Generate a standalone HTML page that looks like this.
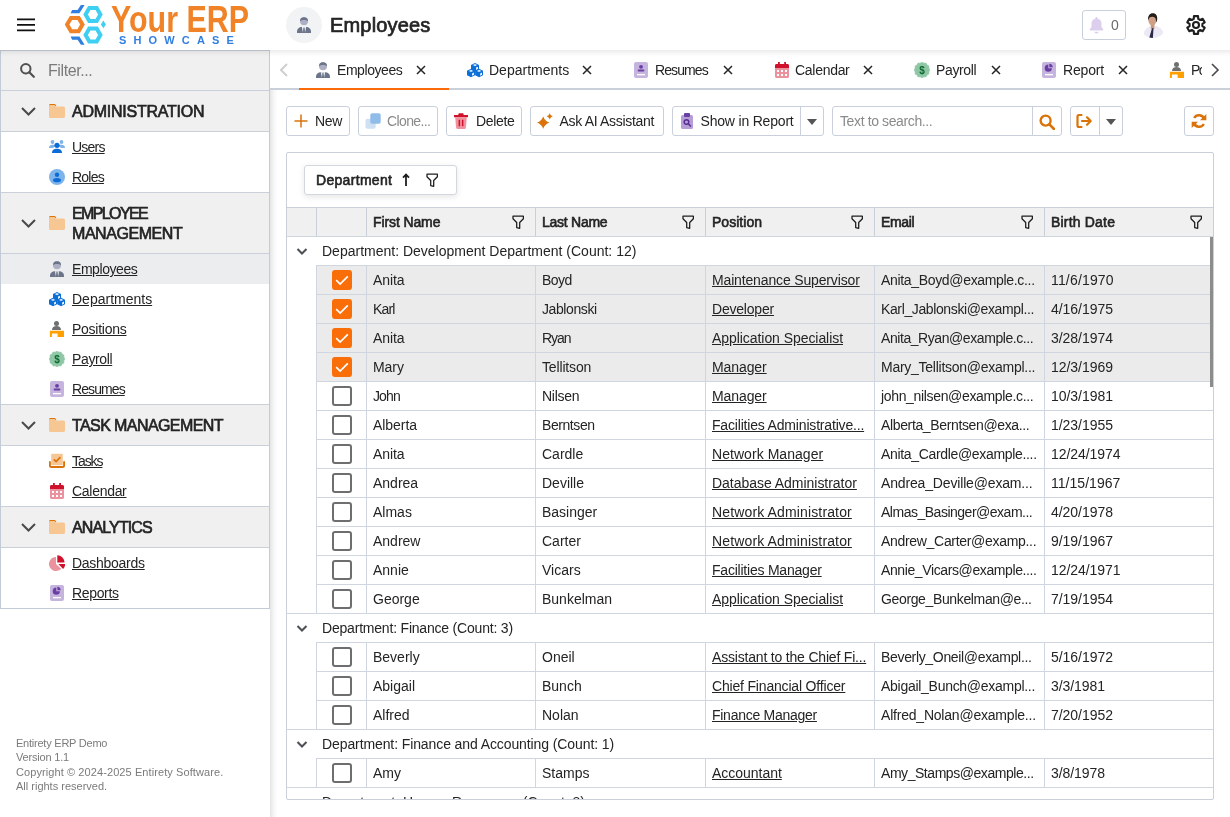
<!DOCTYPE html>
<html lang="en">
<head>
<meta charset="utf-8">
<title>Employees - Your ERP Showcase</title>
<style>
*{box-sizing:border-box;margin:0;padding:0}
html,body{width:1230px;height:817px;overflow:hidden;background:#fff}
body{font-family:"Liberation Sans",sans-serif;font-size:14px;color:#242424;position:relative;will-change:transform}
svg{display:block}
.abs{position:absolute}
/* ---------- header ---------- */
#hdr{position:absolute;left:0;top:0;width:1230px;height:50px;background:#fff}
#burger{position:absolute;left:17px;top:18px;width:20px;height:14px}
#burger i{position:absolute;left:0;width:20px;height:2px;background:#1a1a1a}
#logo{position:absolute;left:60px;top:0}
#brand1{position:absolute;left:111px;top:1.5px;font-size:36px;font-weight:bold;color:#f08228;line-height:36px;white-space:nowrap;transform:scaleX(.845);transform-origin:0 0}
#brand2{position:absolute;left:119px;top:34px;font-size:11px;font-weight:bold;color:#2f7fe0;letter-spacing:7.15px;line-height:12px;white-space:nowrap}
#ttlico{position:absolute;left:286px;top:7px;width:36px;height:36px;border-radius:50%;background:#f2f3f4}
#ttl{position:absolute;left:330px;top:11px;font-size:20px;font-weight:normal;-webkit-text-stroke:.7px #242424;letter-spacing:.17px;line-height:28px;color:#242424;white-space:nowrap}
#bell{position:absolute;left:1082px;top:10px;width:44px;height:30px;border:1px solid #c9d0db;border-radius:3px;background:#fff}
#bell span{position:absolute;left:28px;top:6px;font-size:14px;line-height:16px;color:#6b6b6b}
/* ---------- sidebar ---------- */
#side{position:absolute;left:0;top:50px;width:270px;height:767px;background:#fff}
#nav{position:absolute;left:0;top:0;width:270px;height:559px;border:1px solid #c3cbd6}
.shadow{position:absolute;left:270px;top:90px;width:8px;height:727px;background:linear-gradient(90deg,rgba(0,0,0,.10),rgba(0,0,0,.03) 50%,rgba(0,0,0,0))}
.hshadow{position:absolute;left:0;top:50px;width:1230px;height:7px;background:linear-gradient(180deg,rgba(0,0,0,.075),rgba(0,0,0,.02) 60%,rgba(0,0,0,0))}
.frow{position:absolute;left:0;top:0;width:268px;height:39px;background:#f0f0f0}
.frow span{position:absolute;left:47px;top:10px;font-size:16px;line-height:20px;color:#7a7a7a;letter-spacing:-.4px}
.gh{position:absolute;left:0;width:268px;background:#f0f0f0;border-bottom:1px solid #c9d0da;border-top:1px solid #c9d0da}
.gh b{position:absolute;left:71px;font-size:16px;line-height:20px;font-weight:normal;-webkit-text-stroke:.65px #242424;color:#242424;white-space:nowrap}
.gh .chev{position:absolute;left:20px}
.gh .fold{position:absolute;left:48px}
.ni{position:absolute;left:0;width:268px;height:30px}
.ni.sel{background:#ecedee}
.ni a{position:absolute;left:71px;top:6px;font-size:14px;line-height:18px;color:#242424;text-decoration:underline;white-space:nowrap}
.ni svg{position:absolute;left:48px;top:7px}
#foot{position:absolute;left:16px;top:686px;font-size:11px;line-height:14.35px;color:#7b7b7b;white-space:nowrap}
/* ---------- tabs ---------- */
#tabs{position:absolute;left:270px;top:50px;width:960px;height:40px;border-bottom:2px solid #c9d0da}
.tab{position:absolute;top:0;height:40px}
.tl{position:absolute;top:11px;font-size:14px;line-height:18px;white-space:nowrap;color:#242424}
.tab svg{position:absolute}
.tabline{position:absolute;left:299px;top:88px;width:150px;height:2px;background:#fa6a0a}
/* ---------- toolbar ---------- */
.btn{position:absolute;top:106px;height:30px;border:1px solid #c9d0db;border-radius:3px;background:#fff}
.bl{position:absolute;top:6px;font-size:14px;line-height:16px;white-space:nowrap}
.sep{position:absolute;top:0;width:1px;height:28px;background:#c9d0db}
.btn svg{position:absolute}
/* ---------- grid ---------- */
#grid{position:absolute;left:286px;top:152px;width:928px;height:648px;border:1px solid #c9d0da;border-radius:2px;overflow:hidden;background:#fff}
#chip{position:absolute;left:17px;top:12px;width:153px;height:30px;border:1px solid #d3d8e0;border-radius:3px;background:#fff;box-shadow:0 2px 6px rgba(0,0,0,.10)}
#chip b{position:absolute;left:11px;top:6px;font-size:14px;line-height:16px;font-weight:normal;-webkit-text-stroke:.6px #242424;white-space:nowrap}
.gr{position:absolute;left:0;width:926px;height:29px}
.gr.g{border-top:1px solid #cfd6df}
.gr.hd{background:#f0f0f0;border-top:1px solid #c9d0da}
.gr.sel .c{background:#ebebeb}
.c{position:absolute;top:0;height:29px;border-left:1px solid #cfd6df;border-top:1px solid #cfd6df;padding-left:6px;font-size:14px;line-height:28px;white-space:nowrap;overflow:hidden}
.gr.hd .c{top:-1px;border-top-color:#c9d0da;padding-left:6px;-webkit-text-stroke:.6px #242424;border-left-color:#c9d0da}
.c0{left:29px;width:50px}.c1{left:79px;width:169px}.c2{left:248px;width:170px}.c3{left:418px;width:169px}.c4{left:587px;width:170px}.c5{left:757px;width:169px}
.c u{text-decoration:underline}
.gt{position:absolute;left:35px;top:0;font-size:14px;line-height:28px;white-space:nowrap}
.gchev{position:absolute;left:9px;top:8px}
.cb{position:absolute;left:15px;top:4px;width:20px;height:20px;border:2px solid #6e6e6e;border-radius:3px;background:#fff}
.cb.on{background:#fa6e0a;border-color:#fa6e0a}
.filt{position:absolute;top:7px;right:11px}
</style>
</head>
<body>
<div id="hdr">
  <svg class="abs" style="left:16px;top:16px" width="20" height="16" viewBox="0 0 20 16"><path d="M1 3.4h18M1 8.9h18M1 14.4h18" stroke="#111" stroke-width="1.9" fill="none"/></svg>
  <svg id="logo" width="50" height="50" viewBox="60 0 50 50">
<polygon points="82.5,24.6 78.6,31.2 71,31.2 67.1,24.6 71,18 78.6,18" fill="none" stroke="#f08228" stroke-width="4" stroke-linejoin="miter"/>
<polygon points="100.4,14.5 96.7,20.9 89.3,20.9 85.6,14.5 89.3,8.1 96.7,8.1" fill="none" stroke="#3ecff2" stroke-width="4"/>
<polygon points="100.4,35 96.7,41.4 89.3,41.4 85.6,35 89.3,28.6 96.7,28.6" fill="none" stroke="#3ecff2" stroke-width="4"/>
<polygon points="100.9,24.4 103.4,20.5 105.9,24.4 103.4,28.3" fill="#3ecff2"/>
<polygon points="70.6,13.2 72.1,10 77.6,10 80.9,5.1 84.6,5.1 79.4,13.2" fill="#2f7fe0"/>
<polygon points="70.6,36.6 72.1,39.8 77.6,39.8 80.9,44.7 84.6,44.7 79.4,36.6" fill="#2f7fe0"/>
</svg>
  <div id="brand1">Your ERP</div>
  <div id="brand2">SHOWCASE</div>
  <div id="ttlico"><svg class="abs" style="left:10px;top:10px" width="16" height="16" viewBox="0 0 16 16"><circle cx="8" cy="4.2" r="4" fill="#adafc4"/><path d="M4 4.2a4 4 0 0 1 8 0c-1.1-.800-2.3-1.2-4-1.2s-2.9.4-4 1.2z" fill="#6b7489"/><path d="M1 16v-1.5C1 11.8 3.2 10 5.8 10h4.4c2.6 0 4.8 1.8 4.8 4.5V16z" fill="#6b7489"/><path d="M5.9 10h4.2L9 16H7z" fill="#f3f5f5"/><path d="M7.4 10.6h1.2l.5 5.4H6.9z" fill="#6b7489"/></svg></div>
  <div id="ttl">Employees</div>
  <div id="bell"><svg class="abs" style="left:6px;top:6px" width="15" height="17" viewBox="0 0 15 17"><path d="M7.5 0c.6 0 1 .4 1 1v.5c2.4.5 4 2.5 4 5v3.5l1.7 2.3c.3.5 0 1.2-.6 1.2H1.4c-.6 0-.9-.7-.6-1.2L2.5 10V6.5c0-2.5 1.6-4.5 4-5V1c0-.6.4-1 1-1z" fill="#dccfee"/><path d="M5.3 14.8h4.4c-.3 1.1-1.1 1.8-2.2 1.8s-1.9-.7-2.2-1.8z" fill="#dccfee"/></svg><span>0</span></div>
  <svg class="abs" style="left:1140px;top:12px;border-radius:50%;overflow:hidden" width="26" height="26" viewBox="0 0 26 26"><g><ellipse cx="13.6" cy="22" rx="9.8" ry="8.2" fill="#ece9f4"/><path d="M10.8 12h3.6v4.5l-1.8 1.5-1.8-1.5z" fill="#c9977c"/><path d="M12 16.2h1.5l-.6 9.8H9.2z" fill="#2b2848"/><ellipse cx="12.4" cy="8.2" rx="4" ry="5.4" fill="#cf9f86"/><path d="M8.2 8.5C7.4 3.8 9.8 1.2 12.8 1.2c3.2 0 5.2 2.6 4.2 7.6l-.9 1.8c.2-3.6-.6-5.6-3.4-5.8-2.4-.2-3.8.8-4.5 3.7z" fill="#241d1a"/></g></svg>
  <svg class="abs" style="left:1185px;top:14px" width="22" height="22" viewBox="0 0 22 22"><path d="M13.22 4.89L13.05 2.13L8.95 2.13L8.78 4.89L6.82 6.02L4.34 4.79L2.3 8.34L4.6 9.87L4.6 12.13L2.3 13.66L4.34 17.21L6.82 15.98L8.78 17.11L8.95 19.87L13.05 19.87L13.22 17.11L15.18 15.98L17.66 17.21L19.7 13.66L17.4 12.13L17.4 9.87L19.7 8.34L17.66 4.79L15.18 6.02Z" fill="none" stroke="#1f1f1f" stroke-width="2.1" stroke-linejoin="round"/><circle cx="11" cy="11" r="3" fill="none" stroke="#1f1f1f" stroke-width="2.1"/></svg>
</div>
<div id="side">
  <div id="nav">
    <div class="frow"><svg class="abs" style="left:18px;top:11px" width="16" height="16" viewBox="0 0 16 16"><circle cx="6.8" cy="6.8" r="4.7" fill="none" stroke="#505050" stroke-width="2"/><path d="M10.3 10.3l4.5 4.5" stroke="#505050" stroke-width="2.2" stroke-linecap="round"/></svg><span>Filter...</span></div>
    <div class="gh" style="top:39px;height:42px"><span class="chev" style="top:13px"><svg width="15" height="14" viewBox="0 0 15 14" ><path d="M1 4l6.5 6.5L14 4" fill="none" stroke="#4a4a4a" stroke-width="2"/></svg></span><span class="fold" style="top:12px"><svg width="16" height="16" viewBox="0 0 16 16" ><path d="M0 2.5C0 1.7.6 1 1.5 1H6l1.5 2H0z" fill="#d9730a"/><path d="M0 3c0-.6.4-1 1-1h4.6l1.5 1.5h7.4c.8 0 1.5.7 1.5 1.5v8.5c0 .8-.7 1.5-1.5 1.5h-13C.7 15 0 14.3 0 13.5z" fill="#f6c793"/></svg></span><b style="top:11px;letter-spacing:-0.25px">ADMINISTRATION</b></div>
    <div class="ni" style="top:81px"><svg width="16" height="16" viewBox="0 0 16 16" ><g fill="#7fb4ea"><circle cx="3.5" cy="3" r="1.9"/><circle cx="12.5" cy="3" r="1.9"/><path d="M0 9c0-2 1.5-3.2 3.5-3.2S6 6.5 6.5 7L4 9z"/><path d="M16 9c0-2-1.5-3.2-3.5-3.2S10 6.5 9.5 7L12 9z"/></g><g fill="#0b6cd8"><circle cx="8" cy="6.3" r="2.6"/><path d="M3 14c0-3 2.2-4.3 5-4.3s5 1.3 5 4.3z"/></g></svg><a style="letter-spacing:-0.79px">Users</a></div>
    <div class="ni" style="top:111px"><svg width="16" height="16" viewBox="0 0 16 16" ><circle cx="8" cy="8" r="8" fill="#7fb4ea"/><circle cx="8" cy="5.8" r="2.2" fill="#0b6cd8"/><path d="M4 11.5c0-1.8 1.8-2.5 4-2.5s4 .7 4 2.5c0 1-1.8 1.8-4 1.8s-4-.8-4-1.8z" fill="#0b6cd8"/></svg><a style="letter-spacing:-0.77px">Roles</a></div>
    <div class="gh" style="top:141px;height:62px"><span class="chev" style="top:23px"><svg width="15" height="14" viewBox="0 0 15 14" ><path d="M1 4l6.5 6.5L14 4" fill="none" stroke="#4a4a4a" stroke-width="2"/></svg></span><span class="fold" style="top:22px"><svg width="16" height="16" viewBox="0 0 16 16" ><path d="M0 2.5C0 1.7.6 1 1.5 1H6l1.5 2H0z" fill="#d9730a"/><path d="M0 3c0-.6.4-1 1-1h4.6l1.5 1.5h7.4c.8 0 1.5.7 1.5 1.5v8.5c0 .8-.7 1.5-1.5 1.5h-13C.7 15 0 14.3 0 13.5z" fill="#f6c793"/></svg></span><b style="top:11px"><span style="letter-spacing:-1.62px">EMPLOYEE</span><br><span style="letter-spacing:-0.44px">MANAGEMENT</span></b></div>
    <div class="ni sel" style="top:203px"><svg width="16" height="16" viewBox="0 0 16 16" ><circle cx="8" cy="4.2" r="4" fill="#adafc4"/><path d="M4 4.2a4 4 0 0 1 8 0c-1.1-.800-2.3-1.2-4-1.2s-2.9.4-4 1.2z" fill="#6b7489"/><path d="M1 16v-1.5C1 11.8 3.2 10.2 5.8 10.2h4.4c2.6 0 4.8 1.6 4.8 4.3V16z" fill="#6b7489"/><path d="M5.9 10.2h4.2L9 16H7z" fill="#ecedee"/><path d="M7.4 10.8h1.2l.5 5.2H6.9z" fill="#6b7489"/></svg><a style="letter-spacing:-0.44px">Employees</a></div>
    <div class="ni" style="top:233px"><svg width="16" height="16" viewBox="0 0 16 16" ><polygon points="8,0.9 12,2.9 12,7.4 8,9.4 4,7.4 4,2.9" fill="#0b6fd6"/><polygon points="8,2 10.2,3.1 8,4.2 5.8,3.1" fill="#d9e9fa"/><polygon points="9.1,5.6000000000000005 10.9,4.7 10.9,7 9.1,7.9" fill="#fff"/><polygon points="4,6.7 8,8.7 8,13.2 4,15.2 0,13.2 0,8.7" fill="#0b6fd6"/><polygon points="4,7.800000000000001 6.2,8.9 4,10 1.7999999999999998,8.9" fill="#d9e9fa"/><polygon points="5.1,11.4 6.9,10.5 6.9,12.8 5.1,13.7" fill="#fff"/><polygon points="12.1,6.7 16.1,8.7 16.1,13.2 12.1,15.2 8.1,13.2 8.1,8.7" fill="#0b6fd6"/><polygon points="12.1,7.800000000000001 14.3,8.9 12.1,10 9.899999999999999,8.9" fill="#d9e9fa"/><polygon points="13.2,11.4 15,10.5 15,12.8 13.2,13.7" fill="#fff"/></svg><a style="">Departments</a></div>
    <div class="ni" style="top:263px"><svg width="16" height="16" viewBox="0 0 16 16" ><circle cx="7.5" cy="2.5" r="2.5" fill="#6f6f6f"/><path d="M3 9c0-2.6 1.8-4 4.5-4s4.5 1.4 4.5 4z" fill="#6f6f6f"/><path d="M.9 9.8H15V16H8.6v-3.6H2.9V16h-2z" fill="#ffa000"/></svg><a style="letter-spacing:-0.26px">Positions</a></div>
    <div class="ni" style="top:293px"><svg width="16" height="16" viewBox="0 0 16 16" ><polygon points="8,0 9.84,1.14 12,1.07 13.02,2.98 14.93,4 14.86,6.16 16,8 14.86,9.84 14.93,12 13.02,13.02 12,14.93 9.84,14.86 8,16 6.16,14.86 4,14.93 2.98,13.02 1.07,12 1.14,9.84 0,8 1.14,6.16 1.07,4 2.98,2.98 4,1.07 6.16,1.14" fill="#8fc7a6" stroke="#8fc7a6" stroke-width=".6" stroke-linejoin="round"/><text x="8" y="11.5" font-family="Liberation Sans,sans-serif" font-weight="bold" font-size="10" fill="#0e6a2f" text-anchor="middle">$</text></svg><a style="letter-spacing:-0.37px">Payroll</a></div>
    <div class="ni" style="top:323px"><svg width="16" height="16" viewBox="0 0 16 16" ><rect x="1" y="0" width="14" height="16" rx="2" fill="#c5b4dd"/><circle cx="8" cy="4.8" r="1.9" fill="#6a3fa3"/><rect x="4.6" y="7.5" width="6.8" height="2" rx="1" fill="#6a3fa3"/><rect x="4" y="12" width="8" height="1.3" fill="#fff"/></svg><a style="letter-spacing:-0.91px">Resumes</a></div>
    <div class="gh" style="top:353px;height:42px"><span class="chev" style="top:13px"><svg width="15" height="14" viewBox="0 0 15 14" ><path d="M1 4l6.5 6.5L14 4" fill="none" stroke="#4a4a4a" stroke-width="2"/></svg></span><span class="fold" style="top:12px"><svg width="16" height="16" viewBox="0 0 16 16" ><path d="M0 2.5C0 1.7.6 1 1.5 1H6l1.5 2H0z" fill="#d9730a"/><path d="M0 3c0-.6.4-1 1-1h4.6l1.5 1.5h7.4c.8 0 1.5.7 1.5 1.5v8.5c0 .8-.7 1.5-1.5 1.5h-13C.7 15 0 14.3 0 13.5z" fill="#f6c793"/></svg></span><b style="top:11px;letter-spacing:-0.59px">TASK MANAGEMENT</b></div>
    <div class="ni" style="top:395px"><svg width="16" height="16" viewBox="0 0 16 16" ><rect x="2.2" y="0.8" width="11.6" height="11.5" rx="1" fill="#f6c793"/><path d="M4.8 6.3l2.3 2.3 4.3-4.5" fill="none" stroke="#d9730a" stroke-width="1.7"/><path d="M.9 9v3.6c0 .8.6 1.4 1.4 1.4h11.4c.8 0 1.4-.6 1.4-1.4V9" fill="none" stroke="#d9730a" stroke-width="1.9" stroke-linecap="round"/></svg><a style="letter-spacing:-1.07px">Tasks</a></div>
    <div class="ni" style="top:425px"><svg width="16" height="16" viewBox="0 0 16 16" ><path d="M1 6h14v8.5c0 .8-.6 1.5-1.5 1.5h-11C1.6 16 1 15.3 1 14.5z" fill="#ea929e"/><path d="M4 0h1.8v2h4.4V0H12v2h1.5c.9 0 1.5.7 1.5 1.5V6H1V3.5C1 2.7 1.6 2 2.5 2H4z" fill="#d0112b"/><g fill="#fff"><rect x="3" y="8" width="2" height="2"/><rect x="7" y="8" width="2" height="2"/><rect x="11" y="8" width="2" height="2"/><rect x="3" y="12" width="2" height="2"/><rect x="7" y="12" width="2" height="2"/><rect x="11" y="12" width="2" height="2"/></g></svg><a style="letter-spacing:-0.29px">Calendar</a></div>
    <div class="gh" style="top:455px;height:42px"><span class="chev" style="top:13px"><svg width="15" height="14" viewBox="0 0 15 14" ><path d="M1 4l6.5 6.5L14 4" fill="none" stroke="#4a4a4a" stroke-width="2"/></svg></span><span class="fold" style="top:12px"><svg width="16" height="16" viewBox="0 0 16 16" ><path d="M0 2.5C0 1.7.6 1 1.5 1H6l1.5 2H0z" fill="#d9730a"/><path d="M0 3c0-.6.4-1 1-1h4.6l1.5 1.5h7.4c.8 0 1.5.7 1.5 1.5v8.5c0 .8-.7 1.5-1.5 1.5h-13C.7 15 0 14.3 0 13.5z" fill="#f6c793"/></svg></span><b style="top:11px;letter-spacing:-0.88px">ANALYTICS</b></div>
    <div class="ni" style="top:497px"><svg width="16" height="16" viewBox="0 0 16 16" ><path d="M7 9V2A7 7 0 1 0 12.2 13.68z" fill="#ea929e"/><path d="M8.3 0.3A7.2 7.2 0 0 1 15.5 7.5H8.3z" fill="#d0112b"/><path d="M9.4 9H16.1A7.1 7.1 0 0 1 14.11 13.93z" fill="#d0112b"/></svg><a style="letter-spacing:-0.28px">Dashboards</a></div>
    <div class="ni" style="top:527px"><svg width="16" height="16" viewBox="0 0 16 16" ><rect x="1" y="0" width="14" height="16" rx="2" fill="#c5b4dd"/><path d="M7.3 2.6v3.6h3.6A3.6 3.6 0 1 1 7.3 2.6z" fill="#6a3fa3"/><path d="M8.3 1.8a3.5 3.5 0 0 1 3.4 3.4H8.3z" fill="#6a3fa3"/><rect x="4" y="12" width="8" height="1.3" fill="#fff"/></svg><a style="letter-spacing:-0.35px">Reports</a></div>
  </div>
  <div id="foot"><span style="letter-spacing:-.23px">Entirety ERP Demo</span><br><span style="letter-spacing:-.18px">Version 1.1</span><br><span style="letter-spacing:.09px">Copyright © 2024-2025 Entirety Software.</span><br>All rights reserved.</div>
</div>
<div class="hshadow"></div>
<div class="shadow"></div>
<div id="tabs">
  <svg class="abs" style="left:9px;top:13px" width="10" height="14" viewBox="0 0 10 14"><path d="M8 1L2 7l6 6" fill="none" stroke="#cfcfcf" stroke-width="2"/></svg>
  <span class="abs" style="left:45px;top:12px"><svg width="16" height="16" viewBox="0 0 16 16" ><circle cx="8" cy="4.2" r="4" fill="#adafc4"/><path d="M4 4.2a4 4 0 0 1 8 0c-1.1-.800-2.3-1.2-4-1.2s-2.9.4-4 1.2z" fill="#6b7489"/><path d="M1 16v-1.5C1 11.8 3.2 10.2 5.8 10.2h4.4c2.6 0 4.8 1.6 4.8 4.3V16z" fill="#6b7489"/><path d="M5.9 10.2h4.2L9 16H7z" fill="#fff"/><path d="M7.4 10.8h1.2l.5 5.2H6.9z" fill="#6b7489"/></svg></span><span class="tl" style="left:67px;letter-spacing:-0.44px">Employees</span><span class="abs" style="left:146px;top:15px"><svg width="10" height="10" viewBox="0 0 10 10" ><path d="M1 1l8 8M9 1l-8 8" stroke="#242424" stroke-width="1.5" fill="none"/></svg></span>
  <span class="abs" style="left:197px;top:12px"><svg width="16" height="16" viewBox="0 0 16 16" ><polygon points="8,0.9 12,2.9 12,7.4 8,9.4 4,7.4 4,2.9" fill="#0b6fd6"/><polygon points="8,2 10.2,3.1 8,4.2 5.8,3.1" fill="#d9e9fa"/><polygon points="9.1,5.6000000000000005 10.9,4.7 10.9,7 9.1,7.9" fill="#fff"/><polygon points="4,6.7 8,8.7 8,13.2 4,15.2 0,13.2 0,8.7" fill="#0b6fd6"/><polygon points="4,7.800000000000001 6.2,8.9 4,10 1.7999999999999998,8.9" fill="#d9e9fa"/><polygon points="5.1,11.4 6.9,10.5 6.9,12.8 5.1,13.7" fill="#fff"/><polygon points="12.1,6.7 16.1,8.7 16.1,13.2 12.1,15.2 8.1,13.2 8.1,8.7" fill="#0b6fd6"/><polygon points="12.1,7.800000000000001 14.3,8.9 12.1,10 9.899999999999999,8.9" fill="#d9e9fa"/><polygon points="13.2,11.4 15,10.5 15,12.8 13.2,13.7" fill="#fff"/></svg></span><span class="tl" style="left:219px;">Departments</span><span class="abs" style="left:312px;top:15px"><svg width="10" height="10" viewBox="0 0 10 10" ><path d="M1 1l8 8M9 1l-8 8" stroke="#242424" stroke-width="1.5" fill="none"/></svg></span>
  <span class="abs" style="left:363px;top:12px"><svg width="16" height="16" viewBox="0 0 16 16" ><rect x="1" y="0" width="14" height="16" rx="2" fill="#c5b4dd"/><circle cx="8" cy="4.8" r="1.9" fill="#6a3fa3"/><rect x="4.6" y="7.5" width="6.8" height="2" rx="1" fill="#6a3fa3"/><rect x="4" y="12" width="8" height="1.3" fill="#fff"/></svg></span><span class="tl" style="left:385px;letter-spacing:-0.91px">Resumes</span><span class="abs" style="left:453px;top:15px"><svg width="10" height="10" viewBox="0 0 10 10" ><path d="M1 1l8 8M9 1l-8 8" stroke="#242424" stroke-width="1.5" fill="none"/></svg></span>
  <span class="abs" style="left:504px;top:12px"><svg width="16" height="16" viewBox="0 0 16 16" ><path d="M1 6h14v8.5c0 .8-.6 1.5-1.5 1.5h-11C1.6 16 1 15.3 1 14.5z" fill="#ea929e"/><path d="M4 0h1.8v2h4.4V0H12v2h1.5c.9 0 1.5.7 1.5 1.5V6H1V3.5C1 2.7 1.6 2 2.5 2H4z" fill="#d0112b"/><g fill="#fff"><rect x="3" y="8" width="2" height="2"/><rect x="7" y="8" width="2" height="2"/><rect x="11" y="8" width="2" height="2"/><rect x="3" y="12" width="2" height="2"/><rect x="7" y="12" width="2" height="2"/><rect x="11" y="12" width="2" height="2"/></g></svg></span><span class="tl" style="left:525px;letter-spacing:-0.29px">Calendar</span><span class="abs" style="left:593px;top:15px"><svg width="10" height="10" viewBox="0 0 10 10" ><path d="M1 1l8 8M9 1l-8 8" stroke="#242424" stroke-width="1.5" fill="none"/></svg></span>
  <span class="abs" style="left:644px;top:12px"><svg width="16" height="16" viewBox="0 0 16 16" ><polygon points="8,0 9.84,1.14 12,1.07 13.02,2.98 14.93,4 14.86,6.16 16,8 14.86,9.84 14.93,12 13.02,13.02 12,14.93 9.84,14.86 8,16 6.16,14.86 4,14.93 2.98,13.02 1.07,12 1.14,9.84 0,8 1.14,6.16 1.07,4 2.98,2.98 4,1.07 6.16,1.14" fill="#8fc7a6" stroke="#8fc7a6" stroke-width=".6" stroke-linejoin="round"/><text x="8" y="11.5" font-family="Liberation Sans,sans-serif" font-weight="bold" font-size="10" fill="#0e6a2f" text-anchor="middle">$</text></svg></span><span class="tl" style="left:666px;letter-spacing:-0.37px">Payroll</span><span class="abs" style="left:721px;top:15px"><svg width="10" height="10" viewBox="0 0 10 10" ><path d="M1 1l8 8M9 1l-8 8" stroke="#242424" stroke-width="1.5" fill="none"/></svg></span>
  <span class="abs" style="left:771px;top:12px"><svg width="16" height="16" viewBox="0 0 16 16" ><rect x="1" y="0" width="14" height="16" rx="2" fill="#c5b4dd"/><path d="M7.3 2.6v3.6h3.6A3.6 3.6 0 1 1 7.3 2.6z" fill="#6a3fa3"/><path d="M8.3 1.8a3.5 3.5 0 0 1 3.4 3.4H8.3z" fill="#6a3fa3"/><rect x="4" y="12" width="8" height="1.3" fill="#fff"/></svg></span><span class="tl" style="left:793px;letter-spacing:-0.16px">Report</span><span class="abs" style="left:848px;top:15px"><svg width="10" height="10" viewBox="0 0 10 10" ><path d="M1 1l8 8M9 1l-8 8" stroke="#242424" stroke-width="1.5" fill="none"/></svg></span>
  <span class="abs" style="left:899px;top:12px"><svg width="16" height="16" viewBox="0 0 16 16" ><circle cx="7.5" cy="2.5" r="2.5" fill="#6f6f6f"/><path d="M3 9c0-2.6 1.8-4 4.5-4s4.5 1.4 4.5 4z" fill="#6f6f6f"/><path d="M.9 9.8H15V16H8.6v-3.6H2.9V16h-2z" fill="#ffa000"/></svg></span><span class="tl" style="left:921px;letter-spacing:-1.62px">Po</span>
  <div class="abs" style="left:932px;top:8px;width:28px;height:30px;background:#fff"></div><svg class="abs" style="left:940px;top:13px" width="10" height="14" viewBox="0 0 10 14"><path d="M2 1l6 6-6 6" fill="none" stroke="#4a4a4a" stroke-width="1.6"/></svg>
</div>
<div class="tabline"></div>
<div class="btn" style="left:286px;width:64px"><span class="abs" style="left:6px;top:6px"><svg width="16" height="16" viewBox="0 0 16 16" ><path d="M8 1.5v13M1.5 8h13" stroke="#d9730a" stroke-width="1.5" fill="none"/></svg></span><span class="bl" style="left:28px;color:#242424;letter-spacing:-0.35px">New</span></div>
<div class="btn" style="left:358px;width:80px"><span class="abs" style="left:6px;top:6px"><svg width="16" height="16" viewBox="0 0 16 16" ><rect x="0.5" y="5.8" width="10.2" height="10" rx="1.8" fill="#cfe0f3"/><rect x="5.3" y="0.2" width="10.4" height="10.6" rx="1.8" fill="#8fbce8"/></svg></span><span class="bl" style="left:28px;color:#8a8a8a;letter-spacing:-0.62px">Clone...</span></div>
<div class="btn" style="left:446px;width:76px"><span class="abs" style="left:6px;top:6px"><svg width="16" height="16" viewBox="0 0 16 16" ><path d="M2.2 4.5h11.6l-.9 10c-.1.8-.7 1.5-1.5 1.5H4.6c-.8 0-1.4-.7-1.5-1.5z" fill="#f0929d"/><path d="M1 2h4.2L5.8.3h4.4L10.8 2H15v2.3H1z" fill="#d0112b"/><rect x="5.6" y="6.8" width="1.5" height="6.4" fill="#d0112b"/><rect x="8.9" y="6.8" width="1.5" height="6.4" fill="#d0112b"/></svg></span><span class="bl" style="left:29px;color:#242424;letter-spacing:-0.35px">Delete</span></div>
<div class="btn" style="left:530px;width:134px"><span class="abs" style="left:6px;top:6px"><svg width="16" height="16" viewBox="0 0 16 16" ><path d="M6.2 3.3999999999999995Q7.8740000000000006 7.925999999999999 12.4 9.6Q7.8740000000000006 11.274 6.2 15.8Q4.526 11.274 0 9.6Q4.526 7.925999999999999 6.2 3.3999999999999995z" fill="#d9730a"/><path d="M12.7 0.2999999999999998Q13.45 2.55 15.7 3.3Q13.45 4.05 12.7 6.3Q11.95 4.05 9.7 3.3Q11.95 2.55 12.7 0.2999999999999998z" fill="#d9730a"/></svg></span><span class="bl" style="left:28.5px;color:#242424;letter-spacing:-0.32px">Ask AI Assistant</span></div>
<div class="btn" style="left:672px;width:152px"><span class="abs" style="left:6px;top:6px"><svg width="16" height="16" viewBox="0 0 16 16" ><rect x="2" y="2" width="12" height="14" rx="1.5" fill="#b59ed6"/><rect x="5" y="0" width="6" height="4" rx="1" fill="#6a3fa3"/><circle cx="7.5" cy="9" r="2.3" fill="none" stroke="#5a2d94" stroke-width="1.5"/><path d="M9.2 10.7l2.3 2.3" stroke="#5a2d94" stroke-width="1.6" stroke-linecap="round"/></svg></span><span class="bl" style="left:27.5px;color:#242424;letter-spacing:-0.19px">Show in Report</span><i class="sep" style="left:127px"></i><svg class="abs" style="left:133.5px;top:12px" width="10" height="6" viewBox="0 0 10 6"><path d="M0 0h10L5 6z" fill="#555"/></svg></div>
<div class="btn" style="left:832px;width:230px"><span class="bl" style="left:7px;color:#8a8a8a;letter-spacing:-0.38px">Text to search...</span><i class="sep" style="left:199px"></i><span class="abs" style="left:206px;top:6.5px"><svg width="16" height="16" viewBox="0 0 16 16" ><circle cx="6.6" cy="6.6" r="5" fill="none" stroke="#d9730a" stroke-width="2.4"/><path d="M10.4 10.4l4.6 4.6" stroke="#d9730a" stroke-width="2.6" stroke-linecap="round"/></svg></span></div>
<div class="btn" style="left:1070px;width:53px"><span class="abs" style="left:5px;top:6px"><svg width="18" height="16" viewBox="0 0 18 16" ><path d="M5.5 2H3c-.8 0-1.5.7-1.5 1.5v9c0 .8.7 1.5 1.5 1.5h2.5" fill="none" stroke="#d9730a" stroke-width="2.2" stroke-linecap="round"/><path d="M6 8h8.5M11 4.3L14.7 8 11 11.7" fill="none" stroke="#d9730a" stroke-width="2.2" stroke-linecap="round" stroke-linejoin="round"/></svg></span><i class="sep" style="left:28px"></i><svg class="abs" style="left:35px;top:12px" width="10" height="6" viewBox="0 0 10 6"><path d="M0 0h10L5 6z" fill="#555"/></svg></div>
<div class="btn" style="left:1184px;width:30px"><span class="abs" style="left:6px;top:6px"><svg width="16" height="16" viewBox="0 0 16 16" ><path d="M13.2 6.4A5.4 5.4 0 0 0 3.2 5M2.8 9.6A5.4 5.4 0 0 0 12.8 11" fill="none" stroke="#d9730a" stroke-width="2.5"/><path d="M15.3 1v6.3H9z" fill="#d9730a"/><path d="M.7 15V8.7H7z" fill="#d9730a"/></svg></span></div>
<div id="grid">
<div id="chip"><b style="letter-spacing:0.31px">Department</b><svg class="abs" style="left:96px;top:7px" width="10" height="14" viewBox="0 0 10 14"><path d="M5 13V1.8M2 4.6L5 1.6l3 3" fill="none" stroke="#1f1f1f" stroke-width="1.8"/></svg><span class="abs" style="left:121px;top:7px"><svg width="12.4" height="14.4" viewBox="0 0 12.4 14.4" ><path d="M1 1.2h10.4v2.6L7.7 7.5v5.8L4.7 12.6V7.5L1 3.8z" fill="none" stroke="#1f1f1f" stroke-width="1.3" stroke-linejoin="round"/></svg></span></div>
<div class="gr hd" style="top:54px"><div class="c c0"></div><div class="c c1"><span style="letter-spacing:-0.11px">First Name</span><span class="filt"><svg width="12.4" height="14.4" viewBox="0 0 12.4 14.4" ><path d="M1 1.2h10.4v2.6L7.7 7.5v5.8L4.7 12.6V7.5L1 3.8z" fill="none" stroke="#1f1f1f" stroke-width="1.3" stroke-linejoin="round"/></svg></span></div><div class="c c2"><span style="letter-spacing:-0.26px">Last Name</span><span class="filt"><svg width="12.4" height="14.4" viewBox="0 0 12.4 14.4" ><path d="M1 1.2h10.4v2.6L7.7 7.5v5.8L4.7 12.6V7.5L1 3.8z" fill="none" stroke="#1f1f1f" stroke-width="1.3" stroke-linejoin="round"/></svg></span></div><div class="c c3"><span style="letter-spacing:0.03px">Position</span><span class="filt"><svg width="12.4" height="14.4" viewBox="0 0 12.4 14.4" ><path d="M1 1.2h10.4v2.6L7.7 7.5v5.8L4.7 12.6V7.5L1 3.8z" fill="none" stroke="#1f1f1f" stroke-width="1.3" stroke-linejoin="round"/></svg></span></div><div class="c c4"><span style="letter-spacing:-0.35px">Email</span><span class="filt"><svg width="12.4" height="14.4" viewBox="0 0 12.4 14.4" ><path d="M1 1.2h10.4v2.6L7.7 7.5v5.8L4.7 12.6V7.5L1 3.8z" fill="none" stroke="#1f1f1f" stroke-width="1.3" stroke-linejoin="round"/></svg></span></div><div class="c c5"><span style="letter-spacing:0.19px">Birth Date</span><span class="filt"><svg width="12.4" height="14.4" viewBox="0 0 12.4 14.4" ><path d="M1 1.2h10.4v2.6L7.7 7.5v5.8L4.7 12.6V7.5L1 3.8z" fill="none" stroke="#1f1f1f" stroke-width="1.3" stroke-linejoin="round"/></svg></span></div></div>
<div class="gr g" style="top:83px"><span class="gchev"><svg width="12" height="12" viewBox="0 0 12 12" ><path d="M1.5 4l4.5 4.5L10.5 4" fill="none" stroke="#4d5156" stroke-width="2.1"/></svg></span><span class="gt" style="">Department: Development Department (Count: 12)</span></div>
<div class="gr sel" style="top:112px"><div class="c c0"><span class="cb on"><svg width="16" height="16" viewBox="0 0 16 16"><path d="M2.2 8.2l3.9 3.9 7.7-7.7" fill="none" stroke="#fff" stroke-width="1.7"/></svg></span></div><div class="c c1"><span style="letter-spacing:-0.1px">Anita</span></div><div class="c c2"><span style="letter-spacing:-0.57px">Boyd</span></div><div class="c c3"><u style="letter-spacing:-0.15px">Maintenance Supervisor</u></div><div class="c c4"><span style="letter-spacing:-0.33px">Anita_Boyd@example.c...</span></div><div class="c c5"><span style="letter-spacing:0.17px">11/6/1970</span></div></div>
<div class="gr sel" style="top:141px"><div class="c c0"><span class="cb on"><svg width="16" height="16" viewBox="0 0 16 16"><path d="M2.2 8.2l3.9 3.9 7.7-7.7" fill="none" stroke="#fff" stroke-width="1.7"/></svg></span></div><div class="c c1"><span style="letter-spacing:-0.87px">Karl</span></div><div class="c c2"><span style="letter-spacing:-0.4px">Jablonski</span></div><div class="c c3"><u style="letter-spacing:-0.21px">Developer</u></div><div class="c c4"><span style="letter-spacing:-0.38px">Karl_Jablonski@exampl...</span></div><div class="c c5"><span style="letter-spacing:-0.04px">4/16/1975</span></div></div>
<div class="gr sel" style="top:170px"><div class="c c0"><span class="cb on"><svg width="16" height="16" viewBox="0 0 16 16"><path d="M2.2 8.2l3.9 3.9 7.7-7.7" fill="none" stroke="#fff" stroke-width="1.7"/></svg></span></div><div class="c c1"><span style="letter-spacing:-0.1px">Anita</span></div><div class="c c2"><span style="letter-spacing:-1.03px">Ryan</span></div><div class="c c3"><u style="letter-spacing:-0.06px">Application Specialist</u></div><div class="c c4"><span style="letter-spacing:-0.43px">Anita_Ryan@example.c...</span></div><div class="c c5"><span style="letter-spacing:-0.04px">3/28/1974</span></div></div>
<div class="gr sel" style="top:199px"><div class="c c0"><span class="cb on"><svg width="16" height="16" viewBox="0 0 16 16"><path d="M2.2 8.2l3.9 3.9 7.7-7.7" fill="none" stroke="#fff" stroke-width="1.7"/></svg></span></div><div class="c c1"><span style="letter-spacing:-0.07px">Mary</span></div><div class="c c2"><span style="letter-spacing:-0.15px">Tellitson</span></div><div class="c c3"><u style="letter-spacing:-0.09px">Manager</u></div><div class="c c4"><span style="letter-spacing:-0.26px">Mary_Tellitson@exampl...</span></div><div class="c c5"><span style="letter-spacing:-0.04px">12/3/1969</span></div></div>
<div class="gr" style="top:228px"><div class="c c0"><span class="cb"></span></div><div class="c c1"><span style="letter-spacing:-0.89px">John</span></div><div class="c c2"><span style="letter-spacing:-0.28px">Nilsen</span></div><div class="c c3"><u style="letter-spacing:-0.09px">Manager</u></div><div class="c c4"><span style="letter-spacing:-0.34px">john_nilsen@example.c...</span></div><div class="c c5"><span style="letter-spacing:-0.04px">10/3/1981</span></div></div>
<div class="gr" style="top:257px"><div class="c c0"><span class="cb"></span></div><div class="c c1"><span style="letter-spacing:-0.04px">Alberta</span></div><div class="c c2"><span style="letter-spacing:-0.43px">Berntsen</span></div><div class="c c3"><u style="letter-spacing:-0.18px">Facilities Administrative...</u></div><div class="c c4"><span style="letter-spacing:-0.36px">Alberta_Berntsen@exa...</span></div><div class="c c5"><span style="letter-spacing:-0.04px">1/23/1955</span></div></div>
<div class="gr" style="top:286px"><div class="c c0"><span class="cb"></span></div><div class="c c1"><span style="letter-spacing:-0.1px">Anita</span></div><div class="c c2">Cardle</div><div class="c c3"><u style="letter-spacing:0.05px">Network Manager</u></div><div class="c c4"><span style="letter-spacing:-0.33px">Anita_Cardle@example....</span></div><div class="c c5"><span style="letter-spacing:-0.05px">12/24/1974</span></div></div>
<div class="gr" style="top:315px"><div class="c c0"><span class="cb"></span></div><div class="c c1">Andrea</div><div class="c c2">Deville</div><div class="c c3"><u style="letter-spacing:-0.03px">Database Administrator</u></div><div class="c c4"><span style="letter-spacing:-0.16px">Andrea_Deville@exam...</span></div><div class="c c5"><span style="letter-spacing:0.04px">11/15/1967</span></div></div>
<div class="gr" style="top:344px"><div class="c c0"><span class="cb"></span></div><div class="c c1">Almas</div><div class="c c2">Basinger</div><div class="c c3"><u style="letter-spacing:0.14px">Network Administrator</u></div><div class="c c4"><span style="letter-spacing:-0.49px">Almas_Basinger@exam...</span></div><div class="c c5"><span style="letter-spacing:-0.04px">4/20/1978</span></div></div>
<div class="gr" style="top:373px"><div class="c c0"><span class="cb"></span></div><div class="c c1">Andrew</div><div class="c c2">Carter</div><div class="c c3"><u style="letter-spacing:0.14px">Network Administrator</u></div><div class="c c4"><span style="letter-spacing:-0.31px">Andrew_Carter@examp...</span></div><div class="c c5"><span style="letter-spacing:-0.04px">9/19/1967</span></div></div>
<div class="gr" style="top:402px"><div class="c c0"><span class="cb"></span></div><div class="c c1">Annie</div><div class="c c2">Vicars</div><div class="c c3"><u style="letter-spacing:-0.22px">Facilities Manager</u></div><div class="c c4"><span style="letter-spacing:-0.39px">Annie_Vicars@example....</span></div><div class="c c5"><span style="letter-spacing:-0.07px">12/24/1971</span></div></div>
<div class="gr" style="top:431px"><div class="c c0"><span class="cb"></span></div><div class="c c1">George</div><div class="c c2">Bunkelman</div><div class="c c3"><u style="letter-spacing:-0.06px">Application Specialist</u></div><div class="c c4"><span style="letter-spacing:-0.36px">George_Bunkelman@e...</span></div><div class="c c5"><span style="letter-spacing:-0.04px">7/19/1954</span></div></div>
<div class="gr g" style="top:460px"><span class="gchev"><svg width="12" height="12" viewBox="0 0 12 12" ><path d="M1.5 4l4.5 4.5L10.5 4" fill="none" stroke="#4d5156" stroke-width="2.1"/></svg></span><span class="gt" style="letter-spacing:-0.2px">Department: Finance (Count: 3)</span></div>
<div class="gr" style="top:489px"><div class="c c0"><span class="cb"></span></div><div class="c c1">Beverly</div><div class="c c2">Oneil</div><div class="c c3"><u style="letter-spacing:-0.19px">Assistant to the Chief Fi...</u></div><div class="c c4"><span style="letter-spacing:-0.33px">Beverly_Oneil@exampl...</span></div><div class="c c5"><span style="letter-spacing:-0.04px">5/16/1972</span></div></div>
<div class="gr" style="top:518px"><div class="c c0"><span class="cb"></span></div><div class="c c1">Abigail</div><div class="c c2">Bunch</div><div class="c c3"><u style="letter-spacing:-0.18px">Chief Financial Officer</u></div><div class="c c4"><span style="letter-spacing:-0.28px">Abigail_Bunch@exampl...</span></div><div class="c c5"><span style="letter-spacing:-0.07px">3/3/1981</span></div></div>
<div class="gr" style="top:547px"><div class="c c0"><span class="cb"></span></div><div class="c c1">Alfred</div><div class="c c2">Nolan</div><div class="c c3"><u style="letter-spacing:-0.27px">Finance Manager</u></div><div class="c c4"><span style="letter-spacing:-0.21px">Alfred_Nolan@example...</span></div><div class="c c5"><span style="letter-spacing:-0.04px">7/20/1952</span></div></div>
<div class="gr g" style="top:576px"><span class="gchev"><svg width="12" height="12" viewBox="0 0 12 12" ><path d="M1.5 4l4.5 4.5L10.5 4" fill="none" stroke="#4d5156" stroke-width="2.1"/></svg></span><span class="gt" style="letter-spacing:-0.1px">Department: Finance and Accounting (Count: 1)</span></div>
<div class="gr" style="top:605px"><div class="c c0"><span class="cb"></span></div><div class="c c1">Amy</div><div class="c c2">Stamps</div><div class="c c3"><u style="letter-spacing:-0.03px">Accountant</u></div><div class="c c4"><span style="letter-spacing:-0.45px">Amy_Stamps@example...</span></div><div class="c c5"><span style="letter-spacing:-0.07px">3/8/1978</span></div></div>
<div class="gr g" style="top:634px"><span class="gchev"><svg width="12" height="12" viewBox="0 0 12 12" ><path d="M1.5 4l4.5 4.5L10.5 4" fill="none" stroke="#4d5156" stroke-width="2.1"/></svg></span><span class="gt" style="">Department: Human Resources (Count: 8)</span></div>
<div class="abs" style="left:923px;top:84px;width:3px;height:150px;background:#8c8c8c"></div>
</div>
</body>
</html>
